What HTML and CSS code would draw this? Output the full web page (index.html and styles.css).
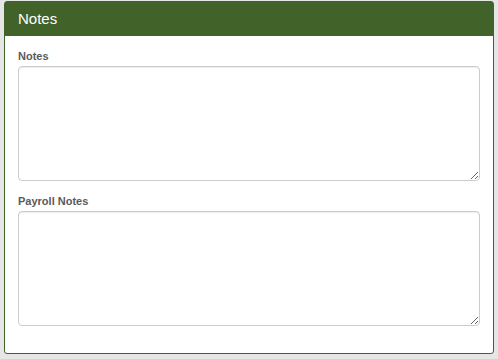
FILE: index.html
```html
<!DOCTYPE html>
<html>
<head>
<meta charset="utf-8">
<link rel="stylesheet" href="styles.css">
</head>
<body>
<div class="panel">
  <div class="panel-heading">Notes</div>
  <div class="panel-body">
    <div class="form-group">
      <label class="control-label">Notes</label>
      <textarea class="form-control"></textarea>
    </div>
    <div class="form-group">
      <label class="control-label">Payroll Notes</label>
      <textarea class="form-control"></textarea>
    </div>
  </div>
</div>
</body>
</html>
```
FILE: styles.css
```css
html, body {
  margin: 0;
  padding: 0;
  background: #e6e6e6;
  font-family: "Liberation Sans", Arial, sans-serif;
}
body {
  padding: 1px 0 0 4px;
}
.panel {
  width: 490px;
  box-sizing: border-box;
  border: 1px solid #41632a;
  border-radius: 3px;
  background: #fff;
}
.panel-heading {
  background: #41632a;
  color: #fff;
  font-size: 15px;
  line-height: 18px;
  height: 34px;
  box-sizing: border-box;
  padding: 8px 13px;
}
.panel-body {
  padding: 13px 13px 27px 13px;
}
.form-group {
  display: flex;
  flex-direction: column;
}
.form-group + .form-group {
  margin-top: 13px;
}
.control-label {
  font-weight: bold;
  font-size: 11px;
  line-height: 15px;
  color: #5a5a5a;
  margin-bottom: 2px;
}
.form-control {
  display: block;
  width: 100%;
  height: 115px;
  box-sizing: border-box;
  border: 1px solid #ccc;
  border-radius: 4px;
  padding: 6px 12px;
  margin: 0;
  background: #fff;
  font-family: inherit;
  box-shadow: inset 0 1px 1px rgba(0,0,0,.075);
}
```
